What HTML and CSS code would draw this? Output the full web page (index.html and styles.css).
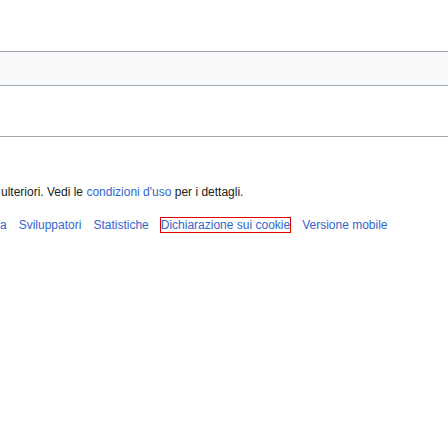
FILE: index.html
```html
<!DOCTYPE html>
<html lang="it">
<head>
<meta charset="utf-8">
<title>Footer</title>
<link rel="stylesheet" href="styles.css">
</head>
<body>
<div class="page">
  <div class="spacer"></div>
  <div class="band"></div>
  <div class="rule"></div>
  <footer class="footer">
    <p class="info">ulteriori. Vedi le <a href="#">condizioni d'uso</a> per i dettagli.</p>
    <ul class="places">
      <li><a href="#">a</a></li>
      <li><a href="#">Sviluppatori</a></li>
      <li><a href="#">Statistiche</a></li>
      <li><a href="#" class="focused">Dichiarazione sui cookie</a></li>
      <li><a href="#">Versione mobile</a></li>
    </ul>
  </footer>
</div>
</body>
</html>
```
FILE: styles.css
```css
html, body {
  margin: 0;
  padding: 0;
  background: #ffffff;
}
body {
  font-family: "Liberation Sans", Arial, sans-serif;
  color: #202122;
  font-size: 12px;
  line-height: 16px;
  overflow: hidden;
}
.page {
  width: 448px;
  height: 448px;
}
.spacer {
  height: 51px;
}
.band {
  height: 33px;
  background: #f8f9fa;
  border-top: 1px solid #a2a9b1;
  border-bottom: 1px solid #a2a9b1;
}
.rule {
  margin-top: 50px;
  border-top: 1px solid #a2a9b1;
}
.footer {
  padding-top: 47px;
}
.info {
  margin: 0;
  padding-left: 1px;
  white-space: nowrap;
}
a {
  color: #3366cc;
  text-decoration: none;
}
.places {
  list-style: none;
  margin: 17px 0 0 0;
  padding: 0;
  display: flex;
  gap: 12px;
  white-space: nowrap;
}
.places li {
  margin: 0;
}
.focused {
  outline: 1px solid #e00000;
}
```
